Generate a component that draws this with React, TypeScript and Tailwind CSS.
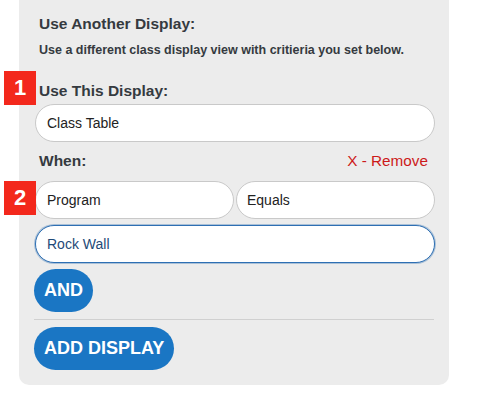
type Condition = {
  field: string
  operator: string
  value: string
}

const conditions: Condition[] = [{ field: 'Program', operator: 'Equals', value: 'Rock Wall' }]

function Marker({ n, className }: { n: number; className: string }) {
  return (
    <span
      className={`absolute left-[-31px] flex h-[34px] w-[32px] items-center justify-center bg-[#f3281c] text-[22px] font-bold leading-none text-white ${className}`}
    >
      {n}
    </span>
  )
}

export default function App() {
  return (
    <div className="min-h-[411px] bg-white font-['Liberation_Sans',Arial,sans-serif]">
      <div className="ml-[19px] w-[430px] rounded-b-[10px] bg-[#ececec] pb-[15px] pl-[16px] pr-[14px] pt-[15px]">
        <h2 className="pl-1 text-[15.5px] font-bold leading-[18px] text-[#353a40]">Use Another Display:</h2>
        <p className="mt-[9px] pl-1 text-[12.5px] font-bold leading-4 text-[#353a40]">
          Use a different class display view with critieria you set below.
        </p>

        <div className="relative mt-6">
          <Marker n={1} className="top-[-11px]" />
          <label className="block pl-1 text-[15.5px] font-bold leading-[18px] text-[#353a40]">Use This Display:</label>
        </div>
        <div className="mt-1 flex h-[38px] items-center rounded-full border border-[#c9c9c9] bg-white px-[11px] text-[14px] text-[#222]">
          Class Table
        </div>

        <div className="mt-[10px] flex items-center justify-between pl-1 pr-[7px] leading-[18px]">
          <span className="text-[15.5px] font-bold text-[#353a40]">When:</span>
          <button type="button" className="text-[15.3px] text-[#cc1a1a]">
            X - Remove
          </button>
        </div>

        {conditions.map((c, i) => (
          <div key={i} className="relative mt-[11px]">
            <Marker n={i + 2} className="top-0" />
            <div className="grid grid-cols-2 gap-[2px]">
              <div className="flex h-[38px] items-center rounded-full border border-[#c9c9c9] bg-white px-[11px] text-[14px] text-[#222]">
                {c.field}
              </div>
              <div className="flex h-[38px] items-center rounded-full border border-[#c9c9c9] bg-white px-[10px] text-[14px] text-[#222]">
                {c.operator}
              </div>
            </div>
            <div className="mt-[6px] flex h-[38px] items-center rounded-full border border-[#2e6fb3] bg-white px-[11px] text-[14px] text-[#1e4a78] shadow-[0_0_0_1px_rgba(46,111,179,0.35)]">
              {c.value}
            </div>
          </div>
        ))}

        <button
          type="button"
          className="ml-[-1px] mt-[6px] h-[43px] rounded-full bg-[#1a76c4] px-[10px] text-[18px] font-bold text-white"
        >
          AND
        </button>

        <div className="ml-[-1px] mr-px mt-[7px] h-px bg-[#d0d0d0]" />

        <button
          type="button"
          className="ml-[-1px] mt-[7px] h-[43px] rounded-full bg-[#1a76c4] px-[10px] text-[18px] font-bold text-white"
        >
          ADD DISPLAY
        </button>
      </div>
    </div>
  )
}
